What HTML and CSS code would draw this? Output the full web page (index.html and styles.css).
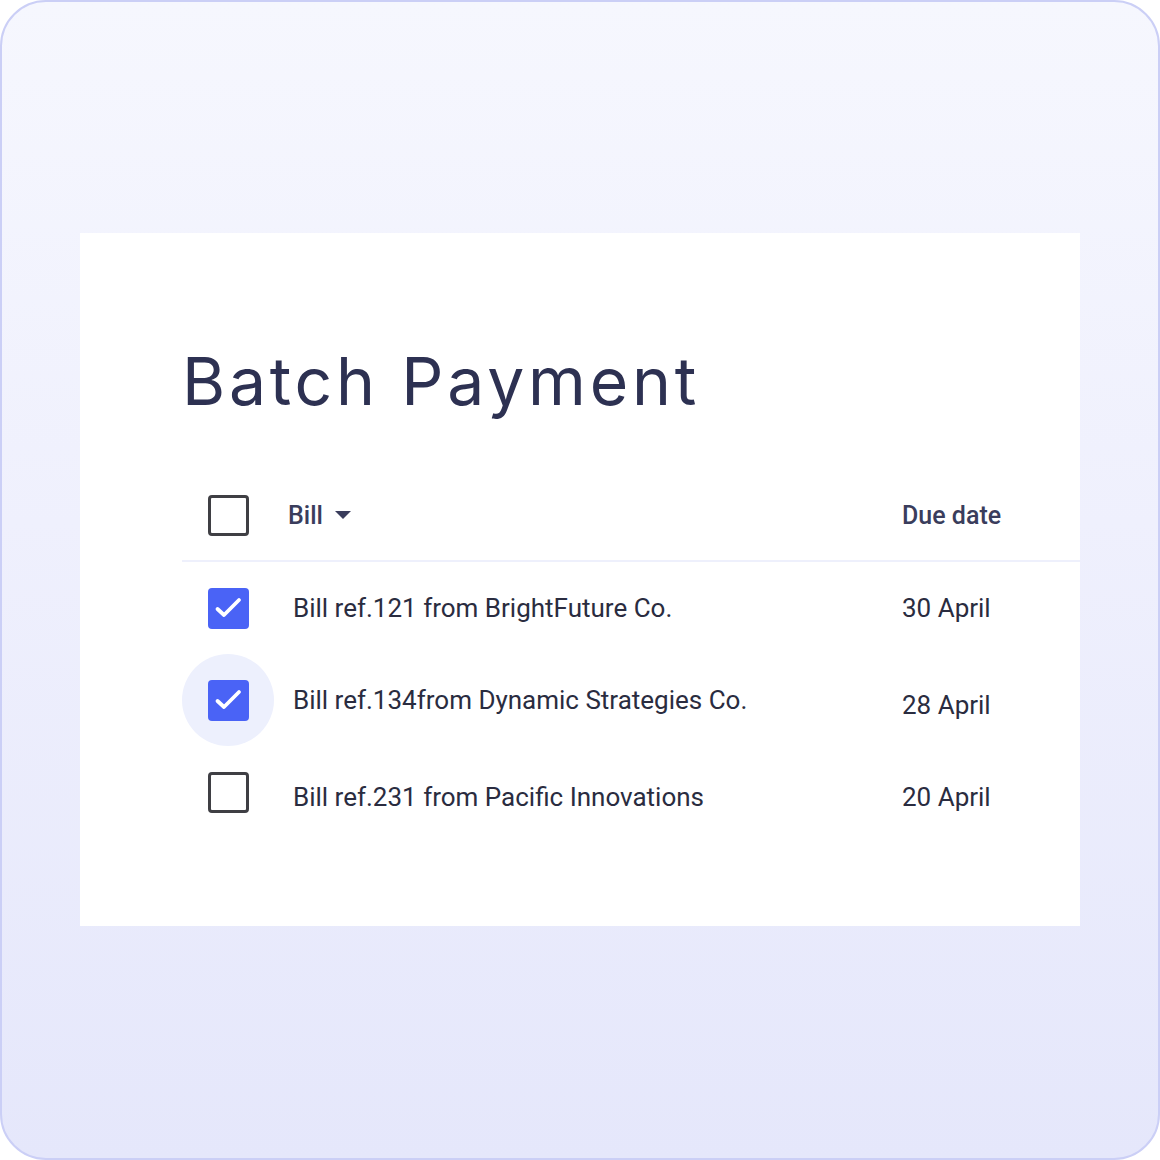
FILE: index.html
```html
<!DOCTYPE html>
<html lang="en">
<head>
<meta charset="utf-8">
<title>Batch Payment</title>
<link rel="stylesheet" href="styles.css">
</head>
<body>
<div class="frame">
  <section class="card">
    <h1 class="title">Batch Payment</h1>
    <div class="table">
      <div class="row head">
        <div class="check-cell"><span class="box"></span></div>
        <div class="bill-col">Bill <svg class="caret" width="16" height="8" viewBox="0 0 16 8"><path d="M0 0 L16 0 L8 8 Z" fill="#3a3d5c"/></svg></div>
        <div class="date-col">Due date</div>
      </div>
      <div class="row">
        <div class="check-cell"><span class="box checked"><svg width="41" height="41" viewBox="0 0 41 41"><path d="M9.5 21 L16 27 L31 12" fill="none" stroke="#fff" stroke-width="3.8" stroke-linecap="round" stroke-linejoin="round"/></svg></span></div>
        <div class="bill-col">Bill ref.121 from BrightFuture Co.</div>
        <div class="date-col">30 April</div>
      </div>
      <div class="row">
        <div class="check-cell halo"><span class="box checked"><svg width="41" height="41" viewBox="0 0 41 41"><path d="M9.5 21 L16 27 L31 12" fill="none" stroke="#fff" stroke-width="3.8" stroke-linecap="round" stroke-linejoin="round"/></svg></span></div>
        <div class="bill-col">Bill ref.134from Dynamic Strategies Co.</div>
        <div class="date-col low">28 April</div>
      </div>
      <div class="row">
        <div class="check-cell"><span class="box"></span></div>
        <div class="bill-col low-sm">Bill ref.231 from Pacific Innovations</div>
        <div class="date-col low-sm">20 April</div>
      </div>
    </div>
  </section>
</div>
</body>
</html>
```

FILE: styles.css
```css
* { box-sizing: border-box; }
html, body { margin: 0; padding: 0; background: #ffffff; }
body { width: 1160px; height: 1160px; font-family: Roboto, "Liberation Sans", sans-serif; }

.frame {
  width: 1160px;
  height: 1160px;
  border: 2px solid #cbcff6;
  border-radius: 46px;
  background: linear-gradient(180deg, #f6f7fe 0%, #eff0fd 45%, #e5e7fb 100%);
  padding: 231px 0 0 78px;
}

.card {
  width: 1000px;
  height: 693px;
  background: #ffffff;
  padding: 115px 0 0 102px;
}

.title {
  margin: 0;
  font-family: Inter, "Open Sans", sans-serif;
  font-weight: 400;
  font-size: 66px;
  line-height: 66px;
  color: #2d3152;
  letter-spacing: 3.8px;
}

.table { margin-top: 56px; }

.row {
  display: flex;
  align-items: center;
  height: 92px;
  font-size: 26px;
  color: #2a2c40;
}

.row.head {
  border-bottom: 2px solid #eef0fc;
  font-weight: 500;
  font-size: 25px;
  color: #3a3d5c;
}

.check-cell {
  width: 92px;
  height: 92px;
  flex: 0 0 92px;
  display: flex;
  align-items: center;
  justify-content: center;
}

.halo {
  border-radius: 50%;
  background: #edf0fd;
}

.box {
  width: 41px;
  height: 41px;
  border: 3px solid #3f3f44;
  border-radius: 4px;
  display: flex;
  align-items: center;
  justify-content: center;
}

.box.checked {
  border: none;
  background: #4a63f6;
}

.bill-col {
  flex: 1;
  padding-left: 19px;
  display: flex;
  align-items: center;
}

.head .bill-col { padding-left: 14px; }

.caret { margin-left: 12px; }

.date-col {
  width: 178px;
  flex: 0 0 178px;
}

.date-col.low { padding-top: 9px; }
.low-sm { padding-top: 9px; }
```
